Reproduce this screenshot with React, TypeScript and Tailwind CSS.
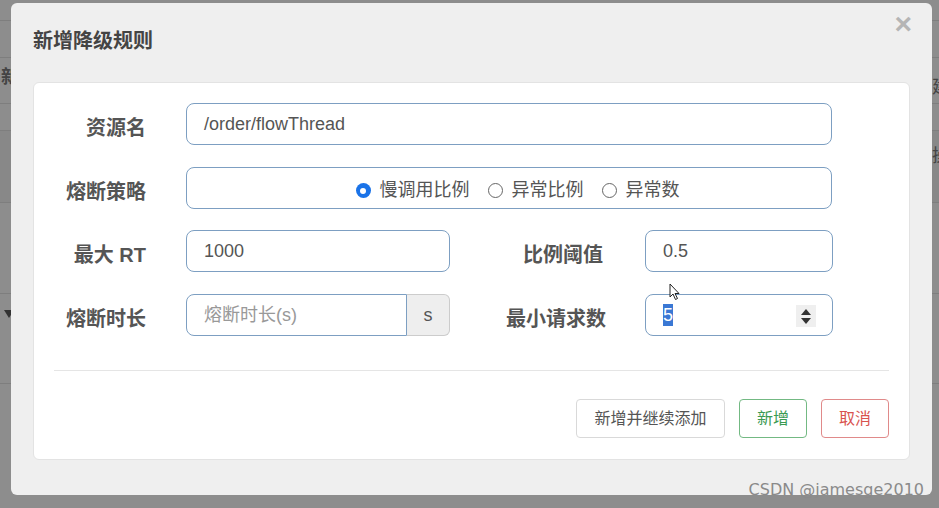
import React from "react";

const font = { fontFamily: '"Liberation Sans", "Noto Sans CJK SC", sans-serif' };

const Label: React.FC<{ children: React.ReactNode; className?: string }> = ({ children, className }) => (
  <div className={"shrink-0 pt-[7px] text-right text-[20px] font-bold text-[#555] " + (className ?? "")}>{children}</div>
);

const inputCls =
  "h-[42px] rounded-[8px] border border-[#7d9fc2] bg-white pl-[17px] flex items-center text-[18px] text-[#555]";

const Radio: React.FC<{ checked?: boolean; label: string }> = ({ checked, label }) => (
  <label className="flex items-center gap-[9px]">
    {checked ? (
      <span className="w-[15px] h-[15px] rounded-full bg-[#1a73e8] flex items-center justify-center">
        <span className="w-[6px] h-[6px] rounded-full bg-white" />
      </span>
    ) : (
      <span className="w-[15px] h-[15px] rounded-full border border-[#666] bg-white" />
    )}
    <span className="text-[18px] text-[#555]">{label}</span>
  </label>
);

export default function App() {
  const lines = [20, 57, 103, 130, 202, 293, 383];
  return (
    <div className="relative w-[939px] h-[508px] overflow-hidden bg-[#8d8d8d]" style={font}>
      {/* page behind the backdrop */}
      {lines.map((y) => (
        <div key={y} className="absolute left-0 right-0 h-px bg-[#7e7e7e]" style={{ top: y }} />
      ))}
      <div className="absolute left-0 right-0 top-[131px] h-[71px] bg-[#888]" />
      <div className="absolute left-[1px] top-[64px] text-[18px] font-bold text-[#444]">新</div>
      <div className="absolute left-[932px] top-[74px] text-[18px] text-[#444]">建</div>
      <div className="absolute left-[932px] top-[143px] text-[18px] text-[#444]">操</div>
      <div className="absolute left-[4px] top-[310px] w-0 h-0 border-l-[5px] border-r-[5px] border-t-[8px] border-l-transparent border-r-transparent border-t-[#333]" />

      {/* modal */}
      <div className="absolute left-[11px] top-[3px] w-[921px] h-[492px] rounded-[6px] bg-[#efefef] px-[22px] flex flex-col">
        <div className="h-[79px] flex items-center justify-between">
          <h3 className="text-[20px] font-bold text-[#444] -mt-[4px]">新增降级规则</h3>
          <span className="text-[30px] leading-none font-bold text-[#b5b5b5] -mt-[38px] -mr-[2px]">×</span>
        </div>

        <div className="h-[378px] rounded-[6px] border border-[#e3e3e3] bg-white flex flex-col pt-[20px]">
          <div className="flex flex-col gap-[22px]">
            <div className="flex items-center">
              <Label className="w-[112px] pt-[3px]">资源名</Label>
              <div className={inputCls + " ml-[40px] w-[646px]"}>/order/flowThread</div>
            </div>
            <div className="flex items-center">
              <Label className="w-[112px]">熔断策略</Label>
              <div className={inputCls + " ml-[40px] w-[646px] justify-center pl-[2px] pt-[5px] gap-[18px]"}>
                <Radio checked label="慢调用比例" />
                <Radio label="异常比例" />
                <Radio label="异常数" />
              </div>
            </div>
            <div className="flex items-center -mt-[1px]">
              <Label className="w-[112px]">最大 RT</Label>
              <div className={inputCls + " ml-[40px] w-[264px]"}>1000</div>
              <Label className="w-[153px]">比例阈值</Label>
              <div className={inputCls + " ml-[42px] w-[188px]"}>0.5</div>
            </div>
            <div className="flex items-center">
              <Label className="w-[112px]">熔断时长</Label>
              <div className="ml-[40px] w-[264px] h-[42px] flex">
                <div className="flex-1 rounded-l-[8px] border border-[#7d9fc2] pl-[17px] flex items-center text-[18px] text-[#999]">
                  熔断时长(s)
                </div>
                <div className="w-[43px] rounded-r-[6px] border border-l-0 border-[#ccc] bg-[#eee] flex items-center justify-center text-[18px] text-[#555]">
                  s
                </div>
              </div>
              <Label className="w-[156px]">最小请求数</Label>
              <div className={inputCls + " relative ml-[39px] w-[188px] pl-[16px]"}>
                <span className="bg-[#3a78d4] text-white leading-[22px]">5</span>
                <div className="absolute right-[16px] top-[10px] w-[20px] h-[22px] bg-[#efefef] flex flex-col items-center justify-center gap-[3px]">
                  <span className="w-0 h-0 border-l-[5px] border-r-[5px] border-b-[6px] border-l-transparent border-r-transparent border-b-[#333]" />
                  <span className="w-0 h-0 border-l-[5px] border-r-[5px] border-t-[6px] border-l-transparent border-r-transparent border-t-[#333]" />
                </div>
                <svg className="absolute left-[23px] -top-[12px]" width="12" height="18" viewBox="0 0 12 18">
                  <path d="M1 1 L1 14 L4 11 L6.5 16.5 L8.5 15.5 L6 10.5 L10 10.5 Z" fill="#fff" stroke="#222" strokeWidth="1" />
                </svg>
              </div>
            </div>
          </div>

          <div className="mt-[34px] mx-[20px] h-px bg-[#e5e5e5]" />

          <div className="mt-[28px] mr-[20px] flex justify-end gap-[14px]">
            <button className="h-[39px] w-[149px] rounded-[4px] border border-[#d9d9d9] bg-white text-[16px] text-[#555]">
              新增并继续添加
            </button>
            <button className="h-[39px] w-[68px] rounded-[4px] border border-[#73b983] bg-white text-[16px] text-[#3a9a52]">
              新增
            </button>
            <button className="h-[39px] w-[68px] rounded-[4px] border border-[#e08a8a] bg-white text-[16px] text-[#d9534f]">
              取消
            </button>
          </div>
        </div>
      </div>

      <div className="absolute right-[15px] top-[478px] text-[16px] text-[#8a8a8a]" style={{ fontFamily: '"DejaVu Sans", sans-serif' }}>
        CSDN @jamesge2010
      </div>
    </div>
  );
}
